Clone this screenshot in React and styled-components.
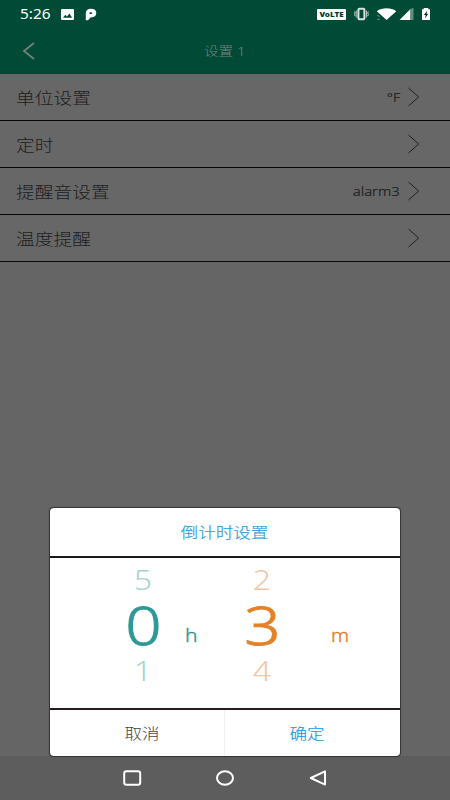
import React from "react";
import styled, { createGlobalStyle } from "styled-components";

const GlobalStyle = createGlobalStyle`
  * { box-sizing: border-box; }
  body { margin: 0; background: #646464; }
`;

const Screen = styled.div`
  position: relative;
  display: flex;
  flex-direction: column;
  width: 450px;
  height: 800px;
  overflow: hidden;
  background: #656565;
  font-family: "Noto Sans", "Noto Sans CJK SC", sans-serif;
`;

/* Wide text: the whole interface uses horizontally expanded lettering. */
const Text = styled.span`
  display: inline-block;
  white-space: nowrap;
  line-height: 1;
  font-size: ${(p) => p.$size}px;
  font-weight: ${(p) => p.$weight || 400};
  color: ${(p) => p.$color};
  transform: scaleX(${(p) => p.$wide || 1.17});
  transform-origin: ${(p) => p.$origin || "center"} center;
  -webkit-text-stroke: ${(p) => p.$stroke || 0}px ${(p) => p.$color};
`;

const StatusBar = styled.div`
  display: flex;
  align-items: center;
  justify-content: space-between;
  height: 28px;
  padding: 0 18px 0 20px;
  background: #004a36;
`;

const StatusGroup = styled.div`
  display: flex;
  align-items: center;
  height: 28px;
`;

const Clock = styled.div`
  display: flex;
  width: 41px;
  padding-top: 2px;
`;

const Notifications = styled.div`
  display: flex;
  align-items: center;
  gap: 11px;
`;

const Header = styled.header`
  display: grid;
  grid-template-columns: 60px 1fr 60px;
  align-items: center;
  height: 46px;
  background: #004a36;
`;

const BackButton = styled.div`
  display: flex;
  padding-left: 22px;
`;

const Title = styled.div`
  display: flex;
  justify-content: center;
  padding-top: 3px;
`;

const List = styled.div`
  display: flex;
  flex-direction: column;
  flex: 1;
`;

const Row = styled.div`
  display: flex;
  align-items: center;
  justify-content: space-between;
  height: 47px;
  padding: 0 30px 0 16px;
  background: #676767;
  border-bottom: 1px solid #080808;
`;

const RowLabel = styled.div`
  display: flex;
  padding-top: 2px;
`;

const RowEnd = styled.div`
  display: flex;
  align-items: center;
  gap: 7px;
`;

const RowValue = styled.div`
  display: flex;
  padding-top: 1px;
`;

const NavBar = styled.nav`
  display: flex;
  align-items: center;
  height: 44px;
  padding-left: 122px;
  gap: 73px;
  background: #5d5d5d;
`;

const Dialog = styled.section`
  position: absolute;
  left: 50px;
  top: 508px;
  display: flex;
  flex-direction: column;
  width: 350px;
  height: 248px;
  border-radius: 4px;
  background: #fff;
  box-shadow: 0 0 1px 0.5px #333;
  overflow: hidden;
`;

const DialogTitle = styled.div`
  display: flex;
  align-items: center;
  justify-content: center;
  height: 50px;
  padding-top: 1px;
  border-bottom: 2px solid #1a1a1a;
`;

const Picker = styled.div`
  display: grid;
  grid-template-columns: 74px 38px 56px 25px 38px 51px 1fr;
  height: 150px;
`;

const Wheel = styled.div`
  display: grid;
  grid-column: ${(p) => p.$column};
  grid-row: 1;
  grid-template-rows: 30px 54px 35px;
  row-gap: 2px;
  align-content: start;
  justify-content: center;
  justify-items: center;
  align-items: center;
  padding-top: 7px;
`;

const Unit = styled.div`
  display: flex;
  grid-column: ${(p) => p.$column};
  grid-row: 1;
  justify-content: center;
  align-items: flex-start;
  padding: ${(p) => p.$pad};
`;

const Actions = styled.div`
  display: grid;
  grid-template-columns: 175px 175px;
  flex: 1;
  border-top: 2px solid #241c20;
`;

const Action = styled.div`
  display: flex;
  align-items: center;
  justify-content: center;
  padding: ${(p) => p.$pad};
  border-right: 1px solid ${(p) => p.$line};
`;

const Chevron = () => (
  <svg width="13" height="20" viewBox="0 0 13 20" fill="none" stroke="#202020" strokeWidth="1">
    <path d="M1.5 1L11.7 10L1.5 19" />
  </svg>
);

const PhotoIcon = () => (
  <svg width="13" height="11" viewBox="0 0 13 11">
    <rect width="13" height="11" rx="1.3" fill="#fff" />
    <path d="M2 8.7L4.3 5.8L6 7.5L8.4 4.6L11.2 8.7Z" fill="#004a36" />
  </svg>
);

const ParkIcon = () => (
  <svg width="12" height="13" viewBox="0 0 12 13">
    <path
      fill="#fff"
      fillRule="evenodd"
      d="M.8 12.2V5.4C.8 2.3 2.6 .8 6 .8C9.5 .8 11.3 2.3 11.3 5C11.3 7.9 9.3 9.4 6 9.4H4.9C4.9 11.3 3.7 12.2 .8 12.2ZM4.6 4.2V6H6.2C7.6 6 7.6 4.2 6.2 4.2Z"
    />
  </svg>
);

const Volte = styled.div`
  display: flex;
  align-items: center;
  justify-content: center;
  width: 29px;
  height: 11px;
  margin-right: 8px;
  border-radius: 1px;
  background: #fff;
`;

const StatusIcons = () => (
  <svg width="78" height="16" viewBox="354 6 78 16">
    <rect x="358.4" y="8.8" width="6" height="10.4" rx="1" fill="none" stroke="#d6e3de" strokeWidth="2" />
    <g fill="none" stroke="#bfd0ca" strokeWidth="1">
      <path d="M356.2 10.5V17.5M366.6 10.5V17.5M354.4 11.5L355.1 13L354.4 14.5L355.1 16M368.4 11.5L367.7 13L368.4 14.5L367.7 16" />
    </g>
    <path d="M376.8 11.2C382 7.4 391 7.4 396.3 11.2L386.6 20Z" fill="#fff" />
    <path d="M377.4 15.2L379.6 16.6M377.4 19.3H379.6" stroke="#7ca397" strokeWidth="1" />
    <path d="M399.5 20L410.5 9V20Z" fill="#fff" />
    <path d="M410.5 9L413.5 7.8V20H410.5Z" fill="#608f80" />
    <path d="M422 9.3H423.7V8H428.3V9.3H430V20H422Z" fill="#fff" />
    <path d="M427.3 10.6L423.9 15H425.7L425 18.5L428.3 13.8H426.5Z" fill="#00372a" />
  </svg>
);

const rows = [
  { label: "单位设置", value: "°F", size: 13 },
  { label: "定时" },
  { label: "提醒音设置", value: "alarm3", size: 13.5 },
  { label: "温度提醒" },
];

const wheels = [
  { column: 2, values: ["5", "0", "1"], color: "#2e9996", faded: "#a9d4cd" },
  { column: 5, values: ["2", "3", "4"], color: "#e58127", faded: "#f0c7a5" },
];

export default function App() {
  return (
    <Screen>
      <GlobalStyle />
      <StatusBar>
        <StatusGroup>
          <Clock>
            <Text $size={13.5} $color="#fff" $origin="left" $wide={1.14}>5:26</Text>
          </Clock>
          <Notifications>
            <PhotoIcon />
            <ParkIcon />
          </Notifications>
        </StatusGroup>
        <StatusGroup>
          <Volte>
            <Text $size={7} $weight={900} $color="#003e2d" $wide={1.15}>VoLTE</Text>
          </Volte>
          <StatusIcons />
        </StatusGroup>
      </StatusBar>
      <Header>
        <BackButton>
          <svg width="13" height="18" viewBox="0 0 13 18" fill="none" stroke="#748078" strokeWidth="1.8">
            <path d="M12 1L2 9L12 17" />
          </svg>
        </BackButton>
        <Title>
          <Text $size={12.5} $color="#7a8580" $weight={300}>设置 1</Text>
        </Title>
      </Header>
      <List>
        {rows.map((row) => (
          <Row key={row.label}>
            <RowLabel>
              <Text $size={16} $color="#1d1d1d" $weight={300} $origin="left">{row.label}</Text>
            </RowLabel>
            <RowEnd>
              {row.value && (
                <RowValue>
                  <Text $size={row.size} $color="#1c1c1c" $weight={300} $stroke={0.2} $wide={1.1} $origin="right">
                    {row.value}
                  </Text>
                </RowValue>
              )}
              <Chevron />
            </RowEnd>
          </Row>
        ))}
      </List>
      <NavBar>
        <svg width="20" height="18" viewBox="0 0 20 18" fill="none" stroke="#fff" strokeWidth="2">
          <rect x="2.2" y="2.2" width="16" height="13.5" rx="2.2" />
        </svg>
        <svg width="20" height="18" viewBox="0 0 20 18" fill="none" stroke="#fff" strokeWidth="2">
          <ellipse cx="10" cy="9" rx="8" ry="6.8" />
        </svg>
        <svg width="20" height="18" viewBox="0 0 20 18" fill="none" stroke="#fff" strokeWidth="2" strokeLinejoin="round">
          <path d="M17 2.4V15.6L2.8 9Z" />
        </svg>
      </NavBar>
      <Dialog>
        <DialogTitle>
          <Text $size={15} $color="#289bdb" $weight={300} $stroke={0.15}>倒计时设置</Text>
        </DialogTitle>
        <Picker>
          {wheels.map((wheel) => (
            <Wheel key={wheel.column} $column={wheel.column}>
              <Text $size={27.5} $color={wheel.faded} $weight={300} $wide={1.17}>{wheel.values[0]}</Text>
              <Text $size={54} $color={wheel.color} $weight={300} $stroke={0.9} $wide={1.18}>{wheel.values[1]}</Text>
              <Text $size={27.5} $color={wheel.faded} $weight={300} $wide={1.17}>{wheel.values[2]}</Text>
            </Wheel>
          ))}
          <Unit $column={3} $pad="68px 0 0 2px">
            <Text $size={18} $color="#2e918d" $weight={300} $stroke={0.3}>h</Text>
          </Unit>
          <Unit $column={7} $pad="68px 68px 0 0">
            <Text $size={18} $color="#df7929" $weight={300} $stroke={0.3} $wide={1.12}>m</Text>
          </Unit>
        </Picker>
        <Actions>
          <Action $line="#f1f1f1" $pad="1px 0 0 10px">
            <Text $size={15} $color="#444" $weight={300}>取消</Text>
          </Action>
          <Action $line="transparent" $pad="1px 10px 0 0">
            <Text $size={15} $color="#1598e8" $weight={300} $stroke={0.15}>确定</Text>
          </Action>
        </Actions>
      </Dialog>
    </Screen>
  );
}
